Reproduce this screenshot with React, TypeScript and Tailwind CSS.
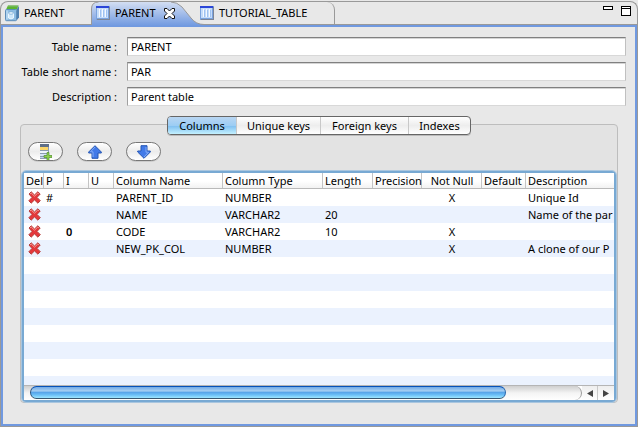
import React from "react";

function DatabaseIcon() {
  return (
    <svg width="15" height="17" viewBox="0 0 15 17" className="shrink-0" aria-hidden="true">
      <path d="M3 .5h10.500L12 4.500H1z" fill="#5cb531" />
      <path d="M3 .5h10.500l-.3 1H2.600z" fill="#86b978" />
      <path d="M11.500 4.500 14 1v11.500l-2.500 3z" fill="#4f7fae" />
      <path d="M.5 5.500q0-1 1-1h9q1 0 1 1v9.200q0 1-1 1h-9q-1 0-1-1z" fill="#8dbce2" stroke="#5d8db9" />
      <path d="M1.500 5.500h1v9h-1z" fill="#d3eafa" />
      <path d="M3.500 8v5q2.500 1.800 5 0V8z" fill="#cfe8fa" stroke="#e9f6ff" />
      <ellipse cx="6" cy="8" rx="2.500" ry="1.200" fill="#f4fbff" stroke="#5b97c8" strokeWidth=".6" />
    </svg>
  );
}

function TableIcon() {
  return (
    <svg width="14" height="14" viewBox="0 0 14 14" className="shrink-0" aria-hidden="true">
      <rect x="0" y="0" width="14" height="14" fill="#7ba3dd" />
      <rect x="0" y="0" width="13" height="2" fill="#2b46d8" />
      <rect x="1" y="2" width="11" height="10" fill="#c5dcfa" />
      <path d="M3.500 3v8M6.500 3v8M9.500 3v8" stroke="#f4f9ff" />
      <path d="M4.500 4v7M7.500 4v7M10.500 4v7" stroke="#9fc2f1" />
      <path d="M13.500 1v13M1 13.500h13" stroke="#7d8595" />
    </svg>
  );
}

function CloseIcon() {
  return (
    <svg width="11" height="11" viewBox="0 0 11 11" aria-hidden="true">
      <path
        d="M.5.5h2.500L5.500 3 8 .5h2.500V3L8 5.500 10.500 8v2.500H8L5.500 8 3 10.500H.5V8L3 5.500.5 3z"
        fill="#fff"
        stroke="#111"
      />
    </svg>
  );
}

function DeleteIcon() {
  return (
    <svg width="13" height="13" viewBox="0 0 13 13" className="block" aria-hidden="true">
      <path
        d="M1 3 3.200.8 6.500 4 9.800.8 12.200 3 9 6.400l3.300 3.300-2.400 2.500-3.400-3.300-3.300 3.300L.8 9.800 4 6.500z"
        fill="#e5383b"
        stroke="#b5413f"
        strokeLinejoin="round"
      />
      <path d="M2 3 3.200 2l3.300 3.200L9.800 2l1 1" fill="none" stroke="#f39b93" />
    </svg>
  );
}

function AddColumnIcon() {
  return (
    <svg width="12" height="16" viewBox="0 0 12 16" aria-hidden="true">
      <rect x="0" y="0" width="9" height="15" fill="#8b9cb0" />
      <rect x="0" y="0" width="9" height="3" fill="#5f6f88" />
      <rect x="0" y="3" width="8" height="3" fill="#fbd568" />
      <rect x="0" y="7" width="8" height="2" fill="#eef5fd" />
      <rect x="0" y="10" width="8" height="2" fill="#d6e5f7" />
      <rect x="0" y="13" width="8" height="1" fill="#c5d7ee" />
      <path d="M7 8.500h2v3h3v2H9v3H7v-3H4v-2h3z" fill="#8ed14b" stroke="#4f8d2e" strokeWidth=".7" />
    </svg>
  );
}

function ArrowIcon({ down = false }: { down?: boolean }) {
  return (
    <svg width="14" height="14" viewBox="0 0 14 14" className={down ? "rotate-180" : ""} aria-hidden="true">
      <path d="M7 .7 13.300 7v1H10v5.300H4V8H.7V7z" fill="#427ae8" stroke="#2557b5" strokeLinejoin="round" />
      <path d="M7 2 2.500 6.800H5V12" fill="none" stroke="#83acf7" />
    </svg>
  );
}

const fields = [
  { id: "name", label: "Table name :", value: "PARENT" },
  { id: "short-name", label: "Table short name :", value: "PAR" },
  { id: "description", label: "Description :", value: "Parent table" },
];

const sections = [
  { label: "Columns", width: "w-[68px]" },
  { label: "Unique keys", width: "w-[84px]" },
  { label: "Foreign keys", width: "w-[88px]" },
  { label: "Indexes", width: "w-[62px]" },
];

const columns = [
  { label: "Del", width: "w-5" },
  { label: "P", width: "w-5" },
  { label: "I", width: "w-[25px]" },
  { label: "U", width: "w-[25px]" },
  { label: "Column Name", width: "w-[109px]" },
  { label: "Column Type", width: "w-[100px]" },
  { label: "Length", width: "w-[50px]" },
  { label: "Precision", width: "w-[49px]" },
  { label: "Not Null", width: "w-[60px]", center: true },
  { label: "Default", width: "w-11" },
  { label: "Description", width: "w-auto" },
];

const rows = [
  ["#", "", "", "PARENT_ID", "NUMBER", "", "", "X", "", "Unique Id"],
  ["", "", "", "NAME", "VARCHAR2", "20", "", "", "", "Name of the par"],
  ["", "0", "", "CODE", "VARCHAR2", "10", "", "X", "", ""],
  ["", "", "", "NEW_PK_COL", "NUMBER", "", "", "X", "", "A clone of our P"],
];

function EditorTabs() {
  return (
    <header className="relative z-10 flex h-[23px] items-stretch rounded-t-lg border-x border-t border-[#999] bg-[#e8e8e8]">
      <button className="flex w-[90px] shrink-0 items-center gap-1 pl-1">
        <DatabaseIcon />
        PARENT
      </button>
      <div className="relative flex w-[109px] shrink-0 items-center">
        <svg
          width="120"
          height="24"
          viewBox="0 0 120 24"
          className="absolute top-0 left-0"
          aria-hidden="true"
        >
          <defs>
            <linearGradient id="active-tab" x1="0" y1="0" x2="0" y2="1">
              <stop offset="0" stopColor="#d3def2" />
              <stop offset="1" stopColor="#7099e0" />
            </linearGradient>
          </defs>
          <path d="M.5 24V7Q.5 0 7.500 0H80q6 0 11 5l9 11q5 6.500 13 6.500V24z" fill="url(#active-tab)" />
          <path d="M.5 23V7Q.5 0 7.500 0M80 0q6 0 11 5l9 11q5 6.500 13 6.500h7" fill="none" stroke="#999" />
        </svg>
        <button className="relative flex items-center gap-[5px] pl-[5px]">
          <TableIcon />
          PARENT
        </button>
        <button aria-label="Close PARENT" className="relative ml-2">
          <CloseIcon />
        </button>
      </div>
      <button className="relative flex w-[135px] shrink-0 items-center gap-[5px] rounded-tr-lg border-r border-[#999]">
        <TableIcon />
        TUTORIAL_TABLE
      </button>
      <div className="ml-auto flex items-start gap-2 pt-1 pr-[6px]">
        <button aria-label="Minimize" className="h-1 w-[10px] border border-black bg-white" />
        <button aria-label="Maximize" className="flex h-[10px] w-[10px] items-start border border-black bg-white">
          <span className="mt-px h-px flex-1 bg-black" />
        </button>
      </div>
    </header>
  );
}

function ColumnsTable() {
  return (
    <div className="flex min-h-0 flex-1 flex-col rounded-sm border-2 border-[#78a9d3] bg-white outline outline-[#a9c6df]">
      <div className="min-h-0 flex-1 overflow-hidden bg-[repeating-linear-gradient(#fff_0_17px,#ebf2fe_17px_34px)] bg-[position:0_16px] bg-[length:100%_34px]">
        <table className="w-full table-fixed border-separate border-spacing-0">
          <thead>
            <tr className="h-4 bg-linear-to-b from-white from-50% to-[#f0f0f0]">
              {columns.map((c) => (
                <th
                  key={c.label}
                  className={`${c.width} ${c.center ? "text-center" : "pl-[2px] text-left"} h-4 overflow-hidden border-b border-[#b9b9b9] bg-[linear-gradient(#c4c4c4,#c4c4c4)] bg-[length:1px_100%] bg-right bg-no-repeat p-0 leading-[15px] font-normal whitespace-nowrap last:bg-none`}
                >
                  {c.label}
                </th>
              ))}
            </tr>
          </thead>
          <tbody>
            {rows.map((row) => (
              <tr key={row[3]} className="h-[17px]">
                <td className="p-0 pl-1">
                  <button aria-label={`Delete ${row[3]}`} className="block">
                    <DeleteIcon />
                  </button>
                </td>
                {row.map((cell, i) => (
                  <td
                    key={i}
                    className={`overflow-hidden p-0 leading-[17px] whitespace-nowrap ${i === 7 ? "text-center" : "pl-[2px]"} ${i === 1 ? "font-semibold" : ""}`}
                  >
                    {cell}
                  </td>
                ))}
              </tr>
            ))}
          </tbody>
        </table>
      </div>
      <div className="flex h-[15px] shrink-0 border-t border-[#b5b5b5]">
        <div className="flex flex-1 rounded-r-full border-r border-[#999] bg-linear-to-b from-[#cfcfcf] via-[#f4f4f4] to-white pl-[6px]">
          <div className="h-[13px] flex-[477] rounded-full border border-t-[#0752b8] border-r-[#2564aa] border-b-[#38566f] border-l-[#28507b] bg-[linear-gradient(#72aae6,#a6cef2_35%,#59a5e9_50%,#69bdf6_70%,#9ee6ff)]" />
          <div className="flex-[75]" />
        </div>
        <button aria-label="Scroll left" className="flex w-4 items-center justify-center border-r border-[#c9c9c9] bg-linear-to-b from-[#eee] to-white">
          <svg width="6" height="7" viewBox="0 0 6 7" aria-hidden="true"><path d="M6 0v7L0 3.500z" fill="#444" /></svg>
        </button>
        <button aria-label="Scroll right" className="flex w-4 items-center justify-center bg-linear-to-b from-[#eee] to-white">
          <svg width="6" height="7" viewBox="0 0 6 7" aria-hidden="true"><path d="M0 0v7l6-3.500z" fill="#444" /></svg>
        </button>
      </div>
    </div>
  );
}

export default function App() {
  const toolButton =
    "flex h-[19px] w-[35px] items-center justify-center rounded-full border border-[#777] bg-linear-to-b from-white via-[#ececec] to-white shadow-[0_1px_0_#ccc]";
  return (
    <div className="flex h-screen flex-col bg-[#e8e8e8] pt-px font-['Noto_Sans','Open_Sans',sans-serif] text-[11px] leading-4 text-black">
      <EditorTabs />
      <main className="flex min-h-0 flex-1 flex-col border border-[#999]">
        <div className="flex min-h-0 flex-1 flex-col border-2 border-[#7099e0] pt-[10px] pr-[9px] pb-[21px] pl-[9px]">
          <form className="flex flex-col gap-[6px]">
            {fields.map((f) => (
              <div key={f.id} className="flex items-center gap-[10px]">
                <label htmlFor={f.id} className="w-[105px] shrink-0 text-right whitespace-nowrap">
                  {f.label}
                </label>
                <input
                  id={f.id}
                  defaultValue={f.value}
                  className="h-[19px] min-w-0 flex-1 border border-t-[#808080] border-r-[#c0c0c0] border-b-[#d8d8d8] border-l-[#a0a0a0] bg-white px-[3px] shadow-[inset_0_1px_0_#d4d4d4] outline-none"
                />
              </div>
            ))}
          </form>
          <section className="mx-2 mt-[18px] flex min-h-0 flex-1 flex-col rounded border border-[#bdbdbd] bg-[#e3e3e3]">
            <nav className="-mt-[9px] flex h-[19px] self-center rounded-[4px] border border-[#666] bg-linear-to-b from-white via-[#ededed] to-white shadow-[0_1px_0_#bbb]">
              {sections.map((s, i) => (
                <button
                  key={s.label}
                  className={`${s.width} ${i === 0 ? "rounded-l-[3px] bg-[linear-gradient(#b9d6f2,#9ccdf4_50%,#7dbdf0_51%,#c3f1ff)]" : "border-l border-[#c8c8c8]"} text-center leading-4`}
                >
                  {s.label}
                </button>
              ))}
            </nav>
            <div className="flex gap-[14px] pt-[7px] pb-[10px] pl-[7px]">
              <button aria-label="Add column" className={toolButton}><AddColumnIcon /></button>
              <button aria-label="Move up" className={toolButton}><ArrowIcon /></button>
              <button aria-label="Move down" className={toolButton}><ArrowIcon down /></button>
            </div>
            <div className="flex min-h-0 flex-1 px-px">
              <div className="flex min-h-0 min-w-0 flex-1 flex-col">
                <ColumnsTable />
              </div>
            </div>
          </section>
        </div>
      </main>
    </div>
  );
}
